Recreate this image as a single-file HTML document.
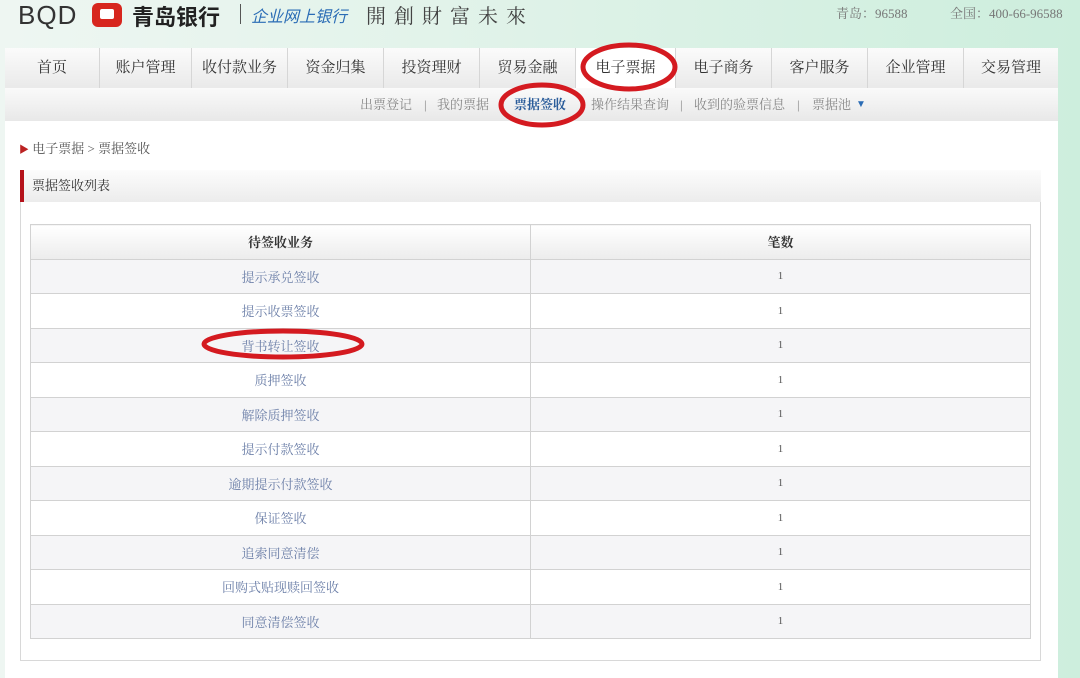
<!DOCTYPE html>
<html><head><meta charset="utf-8"><style>
*{margin:0;padding:0;box-sizing:border-box}
body{width:1080px;height:678px;overflow:hidden;position:relative;font-family:"Liberation Serif","Noto Serif CJK SC",serif;background:linear-gradient(90deg,#eef6f2 0%,#e2f3ea 40%,#cdeedd 100%)}
.abs{position:absolute}
.tabs{position:absolute;left:5px;top:48px;width:1053px;height:41px;display:flex}
.tab{height:41px;border-right:1px solid #d6d6d6;background:linear-gradient(#fbfbfb,#e9e9e9);font-size:15px;color:#333;text-align:center;line-height:41px}
.tab.on{background:#fff}
.sub{position:absolute;left:5px;top:88px;width:1053px;height:33px;background:linear-gradient(#fafafa,#e8e8e8);font-size:13px;color:#888;line-height:33px}
.sub span{position:absolute;top:0}
.main{position:absolute;left:5px;top:121px;width:1053px;height:557px;background:#fff}
table{border-collapse:collapse;table-layout:fixed;position:absolute;left:30px;top:224px;width:1000px;font-size:13px}
td,th{border:1px solid #d2d2d2;height:34.5px;text-align:center;width:500px}
th{font-weight:bold;color:#333;background:linear-gradient(#fff,#ececec)}
td{color:#6c7fa8}
td+td{color:#555;font-size:11px}
tr:nth-child(even) td{background:#f5f5f7}
</style></head><body>
<div class="abs" style="left:18px;top:0;font:26px 'Liberation Sans',sans-serif;color:#333;letter-spacing:1px">BQD</div>
<div class="abs" style="left:92px;top:3px;width:30px;height:24px;background:#d7261e;border-radius:6px"></div>
<div class="abs" style="left:100px;top:9px;width:14px;height:10px;background:#fff;border-radius:2px"></div>
<div class="abs" style="left:132px;top:0;font:bold 22px 'Noto Sans CJK SC',sans-serif;color:#222">青岛银行</div>
<div class="abs" style="left:240px;top:4px;width:1px;height:20px;background:#555"></div>
<div class="abs" style="left:251px;top:3px;font:italic 16px 'Noto Sans CJK SC',sans-serif;color:#2a6cb5">企业网上银行</div>
<div class="abs" style="left:366px;top:0;font:20px 'Noto Serif CJK SC',serif;color:#444;letter-spacing:8px">開創財富未來</div>
<div class="abs" style="left:836px;top:3px;font-size:13px;color:#777">青岛：96588</div>
<div class="abs" style="left:950px;top:3px;font-size:13px;color:#777">全国：400-66-96588</div>
<div class="tabs">
<div class="tab" style="width:95px">首页</div><div class="tab" style="width:92px">账户管理</div><div class="tab" style="width:96px">收付款业务</div><div class="tab" style="width:96px">资金归集</div><div class="tab" style="width:96px">投资理财</div><div class="tab" style="width:96px">贸易金融</div><div class="tab on" style="width:100px">电子票据</div><div class="tab" style="width:96px">电子商务</div><div class="tab" style="width:96px">客户服务</div><div class="tab" style="width:96px">企业管理</div><div class="tab" style="width:94px;border:none">交易管理</div>
</div>
<div class="sub">
<span style="left:355px">出票登记</span><span style="left:419px">|</span><span style="left:432px">我的票据</span><span style="left:509px;color:#2a5c9a;font-weight:bold">票据签收</span><span style="left:586px">操作结果查询</span><span style="left:675px">|</span><span style="left:689px">收到的验票信息</span><span style="left:792px">|</span><span style="left:807px">票据池</span><span style="left:851px;color:#2a6cb5;font-size:10px">▼</span>
</div>
<div class="main"></div>
<div class="abs" style="left:19px;top:138px;font-size:13px;color:#555"><span style="color:#b22;font-size:10px">▶</span> 电子票据 &gt; 票据签收</div>
<div class="abs" style="left:20px;top:170px;width:1021px;height:491px;border:1px solid #d8d8d8"></div>
<div class="abs" style="left:20px;top:170px;width:1021px;height:32px;background:linear-gradient(#fcfcfc,#ececec);border-left:4px solid #b5121b;font-size:13px;color:#333;line-height:32px;padding-left:8px">票据签收列表</div>
<table>
<tr><th>待签收业务</th><th>笔数</th></tr>
<tr><td>提示承兑签收</td><td>1</td></tr>
<tr><td>提示收票签收</td><td>1</td></tr>
<tr><td>背书转让签收</td><td>1</td></tr>
<tr><td>质押签收</td><td>1</td></tr>
<tr><td>解除质押签收</td><td>1</td></tr>
<tr><td>提示付款签收</td><td>1</td></tr>
<tr><td>逾期提示付款签收</td><td>1</td></tr>
<tr><td>保证签收</td><td>1</td></tr>
<tr><td>追索同意清偿</td><td>1</td></tr>
<tr><td>回购式贴现赎回签收</td><td>1</td></tr>
<tr><td>同意清偿签收</td><td>1</td></tr>
</table>
<svg class="abs" style="left:0;top:0" width="1080" height="678">
<g fill="none" stroke="#d41a20" stroke-width="5">
<ellipse cx="629" cy="67" rx="46" ry="22"/>
<ellipse cx="542" cy="105" rx="41" ry="20"/>
<ellipse cx="283" cy="344" rx="79" ry="13"/>
</g></svg>
</body></html>
